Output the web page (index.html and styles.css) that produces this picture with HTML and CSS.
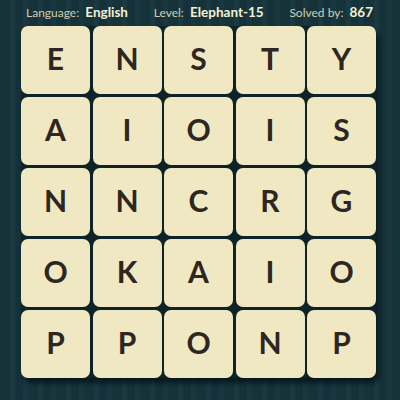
FILE: index.html
```html
<!DOCTYPE html>
<html>
<head>
<meta charset="utf-8">
<link rel="stylesheet" href="styles.css">
</head>
<body>
<div class="page">
  <div class="header">
    <span class="item">Language: <b>English</b></span>
    <span class="item">Level: <b>Elephant-15</b></span>
    <span class="item">Solved by: <b>867</b></span>
  </div>
  <div class="board">
    <div class="tile">E</div><div class="tile">N</div><div class="tile">S</div><div class="tile">T</div><div class="tile">Y</div>
    <div class="tile">A</div><div class="tile">I</div><div class="tile">O</div><div class="tile">I</div><div class="tile">S</div>
    <div class="tile">N</div><div class="tile">N</div><div class="tile">C</div><div class="tile">R</div><div class="tile">G</div>
    <div class="tile">O</div><div class="tile">K</div><div class="tile">A</div><div class="tile">I</div><div class="tile">O</div>
    <div class="tile">P</div><div class="tile">P</div><div class="tile">O</div><div class="tile">N</div><div class="tile">P</div>
  </div>
</div>
</body>
</html>
```
FILE: styles.css
```css
html, body {
  margin: 0;
  padding: 0;
}
body {
  width: 400px;
  height: 400px;
  overflow: hidden;
  background-color: #17343a;
  background-image: repeating-linear-gradient(90deg,
    #16333a 0px, #16333a 10px,
    #1a3940 10px, #1a3940 15px,
    #15313a 15px, #15313a 23px,
    #193740 23px, #193740 28px);
  font-family: Lato, "Liberation Sans", sans-serif;
}
.page {
  display: flex;
  flex-direction: column;
}
.header {
  height: 23px;
  display: flex;
  justify-content: space-between;
  align-items: center;
  padding: 0 27px 0 26px;
  font-size: 12px;
  color: #d2cdb2;
}
.header b {
  color: #f4f0d8;
  font-weight: 700;
  font-size: 13.5px;
  margin-left: 3px;
}
.board {
  margin-top: 3px;
  margin-left: 21px;
  width: 355px;
  height: 352px;
  display: grid;
  grid-template-columns: repeat(5, 1fr);
  grid-template-rows: repeat(5, 1fr);
  gap: 2.5px;
  background: #0d2328;
  border-radius: 8px;
  box-shadow: 3px 5px 5px rgba(4, 16, 19, 0.75);
}
.tile {
  background: #f0e8c3;
  border-radius: 7px;
  display: flex;
  align-items: center;
  justify-content: center;
  font-size: 30px;
  font-weight: 700;
  color: #2e2620;
  padding-bottom: 4px;
  box-sizing: border-box;
}
```
